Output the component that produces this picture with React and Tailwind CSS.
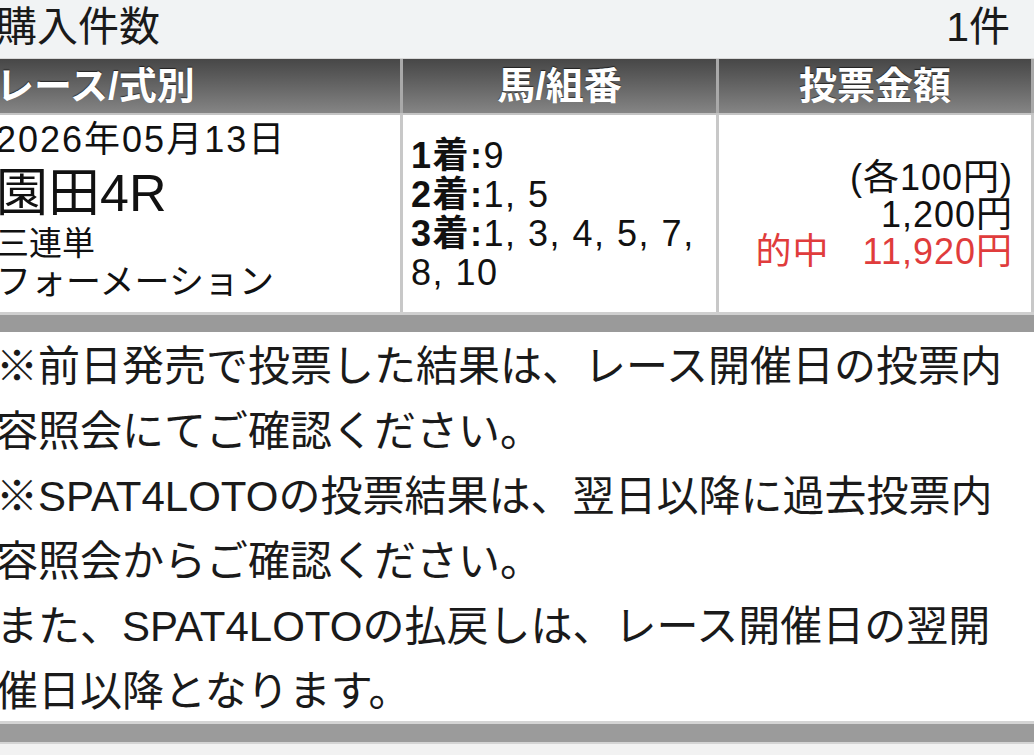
const font = { fontFamily: '"Liberation Sans", "Noto Sans CJK JP", sans-serif' }

export default function App() {
  return (
    <div className="w-[1034px] h-[755px] overflow-hidden bg-[#f2f2f2] text-[#111]" style={font}>
      <div className="w-[1038px] -ml-[4px]">
        {/* Purchase count */}
        <div className="h-[58px] bg-[#f1f3f4] flex items-center justify-between pr-[24px] pb-[4px] text-[41px] leading-none text-[#1a1a1a]">
          <span>購入件数</span>
          <span>1件</span>
        </div>

        {/* Table header */}
        <div className="flex h-[57px] bg-linear-to-b from-[#474747] to-[#858585] border-t border-[#d8d8d8] border-b-2 border-b-[#c4c4c4] text-white font-bold text-[38px] leading-none [text-shadow:0_-1px_1px_rgba(0,0,0,0.6)]">
          <div className="w-[407px] flex items-center border-r-[3px] border-[#a9a9a9]">レース/式別</div>
          <div className="w-[316px] flex items-center justify-center border-r-[3px] border-[#a9a9a9]">馬/組番</div>
          <div className="flex-1 flex items-center justify-center border-r-[3px] border-[#a9a9a9]">投票金額</div>
        </div>

        {/* Table row */}
        <div className="flex h-[197px] bg-white">
          <div className="w-[407px] border-r-[3px] border-[#c8c8c8] pt-[5px]">
            <div className="text-[36px] leading-[40px] tracking-[2px]">2026年05月13日</div>
            <div className="text-[52px] leading-[66px]">園田4R</div>
            <div className="text-[33px] leading-[36px]">三連単</div>
            <div className="text-[35px] leading-[40px]">フォーメーション</div>
          </div>
          <div className="w-[316px] border-r-[3px] border-[#c8c8c8] flex flex-col justify-center pl-[8px] text-[36px] leading-[39px] tracking-[1.5px]">
            <div><b>1着:</b>9</div>
            <div><b>2着:</b>1, 5</div>
            <div><b>3着:</b>1, 3, 4, 5, 7,</div>
            <div>8, 10</div>
          </div>
          <div className="flex-1 border-r-[3px] border-[#c8c8c8] flex flex-col justify-center items-end pr-[18px] pt-[2px] text-[36px] leading-[37px] tracking-[1px]">
            <div>(各100円)</div>
            <div>1,200円</div>
            <div className="text-[#e03c3c]">的中&nbsp;&nbsp;&nbsp;11,920円</div>
          </div>
        </div>

        {/* Divider bar */}
        <div className="h-[20px] bg-[#9a9a9a] border-t-[3px] border-[#cfcfcf]" />

        {/* Notes */}
        <div className="bg-white h-[389px] pt-[2px] text-[42px] leading-[65px] whitespace-nowrap text-[#1a1a1a]">
          <div>※前日発売で投票した結果は、レース開催日の投票内</div>
          <div>容照会にてご確認ください。</div>
          <div>※SPAT4LOTOの投票結果は、翌日以降に過去投票内</div>
          <div>容照会からご確認ください。</div>
          <div>また、SPAT4LOTOの払戻しは、レース開催日の翌開</div>
          <div>催日以降となります。</div>
        </div>

        {/* Bottom bar */}
        <div className="h-[23px] bg-[#9b9b9b] border-t-[3px] border-b-[2px] border-[#d4d4d4]" />
      </div>
    </div>
  )
}
